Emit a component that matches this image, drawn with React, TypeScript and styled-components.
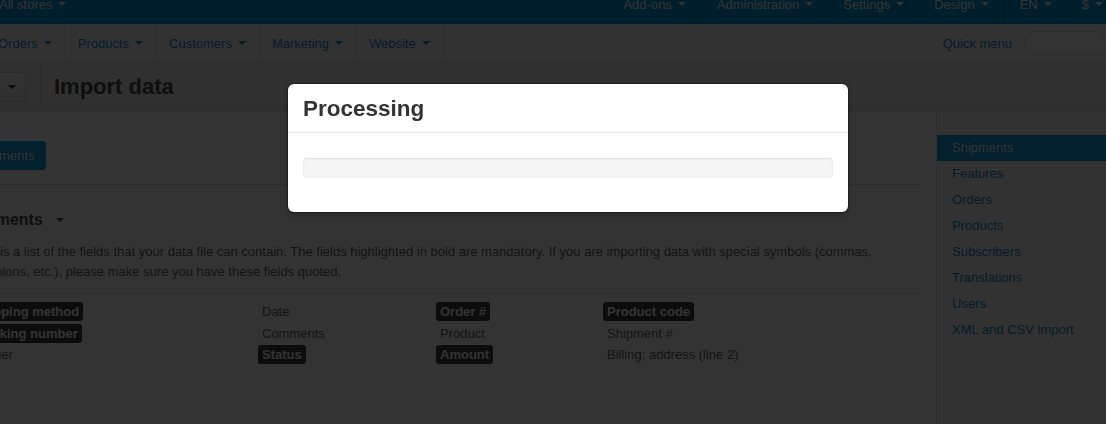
import React from "react";
import styled, { createGlobalStyle } from "styled-components";

const GlobalStyle = createGlobalStyle`
  html, body { margin: 0; padding: 0; overflow: hidden; background: #fff; }
  body {
    font-family: "Liberation Sans", Arial, Helvetica, sans-serif;
    font-size: 13px;
    color: #333;
    width: 1106px;
    height: 424px;
  }
`;

const Page = styled.div`
  margin-left: -59px;
  margin-top: -16px;
  width: 1177px;
  height: 460px;
  background: #fff;
  display: flex;
  flex-direction: column;
`;

const Caret = styled.span<{ $color: string; $gap?: number }>`
  display: inline-block;
  width: 0;
  height: 0;
  margin-left: ${(p) => p.$gap ?? 6}px;
  vertical-align: middle;
  border-top: 4px solid ${(p) => p.$color};
  border-left: 4px solid transparent;
  border-right: 4px solid transparent;
`;

const TopBar = styled.div`
  height: 40px;
  flex: none;
  background: #0097d4;
  display: flex;
  align-items: stretch;
  padding-left: 58px;
  color: #fff;
`;

const StoreSwitch = styled.div`
  display: flex;
  align-items: center;
`;

const TopRight = styled.div`
  margin-left: auto;
  display: flex;
`;

const TopGroup = styled.div<{ $sep?: boolean }>`
  display: flex;
  border-right: ${(p) => (p.$sep ? "1px solid #0a7fb0" : "none")};
`;

const TopItem = styled.div`
  display: flex;
  align-items: center;
  padding: 0 15px;
  white-space: nowrap;
`;

const NavBar = styled.div`
  height: 38px;
  flex: none;
  background: #fafafa;
  border-bottom: 1px solid #e0e0e0;
  display: flex;
  align-items: stretch;
  padding-left: 44px;
  padding-right: 8px;
`;

const NavItem = styled.div`
  display: flex;
  align-items: center;
  padding: 0 12px 0 13px;
  border-right: 1px solid #e6e6e6;
  color: #0b8fd0;
  white-space: nowrap;
`;

const QuickMenu = styled.div`
  margin-left: auto;
  display: flex;
  align-items: center;
  gap: 12px;
  color: #0b8fd0;
`;

const SearchBox = styled.div`
  width: 84px;
  height: 22px;
  border: 1px solid #d6d6d6;
  border-radius: 12px;
  background: #fff;
`;

const Header = styled.div`
  height: 48px;
  flex: none;
  background: #f0f0f0;
  border-bottom: 1px solid #dcdcdc;
  display: flex;
  align-items: stretch;
  padding-left: 37px;
`;

const Tools = styled.div`
  display: flex;
  align-items: center;
  padding-right: 14px;
  border-right: 1px solid #dedede;
`;

const ToolButton = styled.div`
  width: 37px;
  height: 28px;
  border: 1px solid #cfcfcf;
  border-radius: 4px;
  background: linear-gradient(#ffffff, #ececec);
  display: flex;
  align-items: center;
  justify-content: flex-end;
  padding-right: 9px;
`;

const Title = styled.h1`
  margin: 0;
  padding-left: 13px;
  display: flex;
  align-items: center;
  font-size: 22px;
  font-weight: bold;
  color: #4a4a4a;
`;

const Body = styled.div`
  flex: 1;
  display: flex;
  align-items: stretch;
`;

const Main = styled.div`
  width: 995px;
  flex: none;
  box-sizing: border-box;
  padding: 29px 14px 0 20px;
`;

const Tabs = styled.div`
  display: flex;
  padding-bottom: 14px;
  border-bottom: 1px solid #e5e5e5;
`;

const Pill = styled.div`
  height: 29px;
  line-height: 29px;
  padding: 0 12px;
  border-radius: 4px;
  background: #0a9fe0;
  color: #fff;
`;

const SectionTitle = styled.h2`
  margin: 25px 0 0;
  font-size: 16px;
  line-height: 20px;
  font-weight: bold;
  color: #4a4a4a;
  display: flex;
  align-items: center;
`;

const Text = styled.p`
  margin: 12px 0 0;
  line-height: 20px;
  color: #666;
  padding-bottom: 11px;
  border-bottom: 1px solid #e5e5e5;
`;

const Fields = styled.div`
  margin-left: 8px;
  padding-top: 7px;
  display: grid;
  grid-template-columns: 289px 178px 167px 1fr;
  grid-auto-rows: 21.5px;
  align-items: center;
  justify-items: start;
`;

const Field = styled.span<{ $required?: boolean }>`
  display: inline-block;
  padding: 2px 4px;
  line-height: 15px;
  border-radius: 3px;
  white-space: nowrap;
  font-weight: ${(p) => (p.$required ? "bold" : "normal")};
  background: ${(p) => (p.$required ? "#3d3d3d" : "transparent")};
  color: ${(p) => (p.$required ? "#fff" : "#666")};
`;

const Sidebar = styled.div`
  flex: 1;
  background: #f8f8f8;
  border-left: 1px solid #e2e2e2;
  padding-top: 23px;
`;

const SideLink = styled.div<{ $active?: boolean }>`
  height: 26px;
  line-height: 26px;
  padding-left: 15px;
  white-space: nowrap;
  background: ${(p) => (p.$active ? "#0a9fe0" : "transparent")};
  color: ${(p) => (p.$active ? "#fff" : "#0b8fd0")};
`;

const Backdrop = styled.div`
  position: fixed;
  inset: 0;
  background: rgba(0, 0, 0, 0.8);
  z-index: 10;
`;

const Dialog = styled.div`
  position: fixed;
  left: 288px;
  top: 84px;
  width: 560px;
  background: #fff;
  border-radius: 6px;
  box-shadow: 0 0 0 1px rgba(0, 0, 0, 0.3), 0 3px 7px rgba(0, 0, 0, 0.3);
  z-index: 11;
`;

const DialogHeader = styled.div`
  height: 47px;
  padding: 1px 15px 0 15px;
  display: flex;
  align-items: center;
  border-bottom: 1px solid #e9e9e9;
`;

const DialogTitle = styled.h3`
  margin: 0;
  font-size: 22.5px;
  font-weight: bold;
  color: #333;
`;

const DialogBody = styled.div`
  padding: 25px 15px 34px;
`;

const Progress = styled.div`
  height: 20px;
  border-radius: 4px;
  background: #f5f5f5;
  box-shadow: inset 0 1px 2px rgba(0, 0, 0, 0.1);
`;

const fields: [string, boolean][][] = [
  [["Shipping method", true], ["Date", false], ["Order #", true], ["Product code", true]],
  [["Tracking number", true], ["Comments", false], ["Product", false], ["Shipment #", false]],
  [["Carrier", false], ["Status", true], ["Amount", true], ["Billing: address (line 2)", false]],
];

const sideLinks = [
  "Shipments",
  "Features",
  "Orders",
  "Products",
  "Subscribers",
  "Translations",
  "Users",
  "XML and CSV import",
];

export default function App() {
  return (
    <>
      <GlobalStyle />
      <Page>
        <TopBar>
          <StoreSwitch>
            All stores <Caret $color="#fff" />
          </StoreSwitch>
          <TopRight>
            <TopGroup $sep>
              <TopItem>
                Add-ons <Caret $color="#fff" />
              </TopItem>
            </TopGroup>
            <TopGroup $sep>
              <TopItem>
                Administration <Caret $color="#fff" />
              </TopItem>
              <TopItem>
                Settings <Caret $color="#fff" />
              </TopItem>
              <TopItem>
                Design <Caret $color="#fff" />
              </TopItem>
            </TopGroup>
            <TopGroup>
              <TopItem>
                EN <Caret $color="#fff" />
              </TopItem>
              <TopItem>
                $ <Caret $color="#fff" />
              </TopItem>
            </TopGroup>
          </TopRight>
        </TopBar>
        <NavBar>
          {["Orders", "Products", "Customers", "Marketing", "Website"].map((n) => (
            <NavItem key={n}>
              {n} <Caret $color="#0b8fd0" />
            </NavItem>
          ))}
          <QuickMenu>
            Quick menu
            <SearchBox />
          </QuickMenu>
        </NavBar>
        <Header>
          <Tools>
            <ToolButton>
              <Caret $color="#333" $gap={0} />
            </ToolButton>
          </Tools>
          <Title>Import data</Title>
        </Header>
        <Body>
          <Main>
            <Tabs>
              <Pill>Shipments</Pill>
            </Tabs>
            <SectionTitle>
              Shipments <Caret $color="#4a4a4a" $gap={13} />
            </SectionTitle>
            <Text>
              Below is a list of the fields that your data file can contain. The fields highlighted in bold are
              mandatory. If you are importing data with special symbols (commas, semicolons, etc.), please make sure
              you have these fields quoted.
            </Text>
            <Fields>
              {fields.flat().map(([label, req], i) => (
                <Field key={i} $required={req}>
                  {label}
                </Field>
              ))}
            </Fields>
          </Main>
          <Sidebar>
            {sideLinks.map((l, i) => (
              <SideLink key={l} $active={i === 0}>
                {l}
              </SideLink>
            ))}
          </Sidebar>
        </Body>
      </Page>
      <Backdrop />
      <Dialog>
        <DialogHeader>
          <DialogTitle>Processing</DialogTitle>
        </DialogHeader>
        <DialogBody>
          <Progress />
        </DialogBody>
      </Dialog>
    </>
  );
}
